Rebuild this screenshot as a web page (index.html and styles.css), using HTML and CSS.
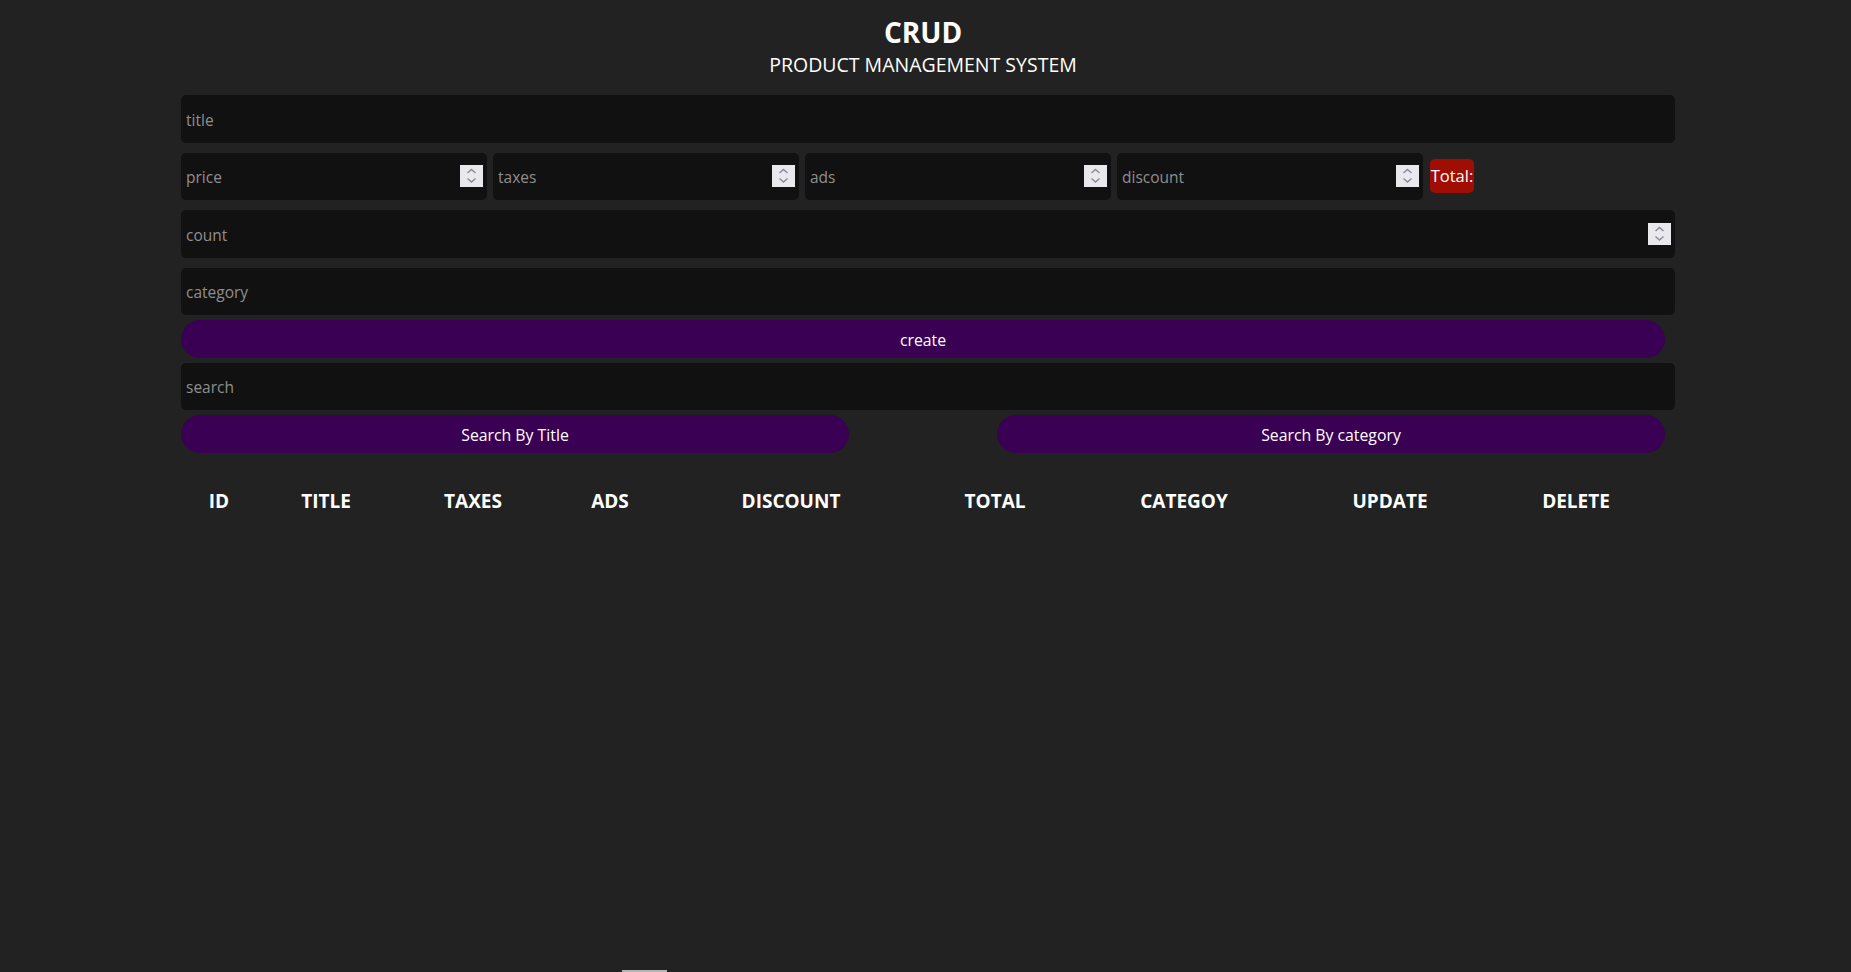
FILE: index.html
```html
<!DOCTYPE html>
<html lang="en">
<head>
<meta charset="utf-8">
<title>CRUD</title>
<link rel="stylesheet" href="styles.css">
</head>
<body>
<div class="crud">
  <div class="head">
    <h2 class="head-title">CRUD</h2>
    <p class="head-sub">PRODUCT MANAGEMENT SYSTEM</p>
  </div>
  <div class="inputs">
    <div class="field wide"><input class="field-input" type="text" placeholder="title"></div>
    <div class="price-row">
      <div class="field small"><input class="field-input" type="text" placeholder="price"><span class="spin"><svg width="23" height="22" viewBox="0 0 23 22"><path d="M7.5 8 L11.5 4.5 L15.5 8 M7.5 13.5 L11.5 17 L15.5 13.5" fill="none" stroke="#8a8a98" stroke-width="1.4"/></svg></span></div>
      <div class="field small"><input class="field-input" type="text" placeholder="taxes"><span class="spin"><svg width="23" height="22" viewBox="0 0 23 22"><path d="M7.5 8 L11.5 4.5 L15.5 8 M7.5 13.5 L11.5 17 L15.5 13.5" fill="none" stroke="#8a8a98" stroke-width="1.4"/></svg></span></div>
      <div class="field small"><input class="field-input" type="text" placeholder="ads"><span class="spin"><svg width="23" height="22" viewBox="0 0 23 22"><path d="M7.5 8 L11.5 4.5 L15.5 8 M7.5 13.5 L11.5 17 L15.5 13.5" fill="none" stroke="#8a8a98" stroke-width="1.4"/></svg></span></div>
      <div class="field small"><input class="field-input" type="text" placeholder="discount"><span class="spin"><svg width="23" height="22" viewBox="0 0 23 22"><path d="M7.5 8 L11.5 4.5 L15.5 8 M7.5 13.5 L11.5 17 L15.5 13.5" fill="none" stroke="#8a8a98" stroke-width="1.4"/></svg></span></div>
      <small class="total">Total:</small>
    </div>
    <div class="field wide"><input class="field-input" type="text" placeholder="count"><span class="spin"><svg width="23" height="22" viewBox="0 0 23 22"><path d="M7.5 8 L11.5 4.5 L15.5 8 M7.5 13.5 L11.5 17 L15.5 13.5" fill="none" stroke="#8a8a98" stroke-width="1.4"/></svg></span></div>
    <div class="field wide"><input class="field-input" type="text" placeholder="category"></div>
    <button class="btn btn-create">create</button>
    <div class="field wide"><input class="field-input" type="text" placeholder="search"></div>
    <div class="btn-search">
      <button class="btn btn-half">Search By Title</button>
      <button class="btn btn-half">Search By category</button>
    </div>
  </div>
  <table class="output">
    <colgroup>
      <col class="c-id"><col class="c-title"><col class="c-taxes"><col class="c-ads"><col class="c-discount"><col class="c-total"><col class="c-category"><col class="c-update"><col class="c-delete">
    </colgroup>
    <thead>
      <tr>
        <th>id</th><th>title</th><th>taxes</th><th>ads</th><th>discount</th><th>total</th><th>categoy</th><th>update</th><th>delete</th>
      </tr>
    </thead>
    <tbody></tbody>
  </table>
</div>
<div class="scroll-thumb"></div>
</body>
</html>
```
FILE: styles.css
```css
html, body {
  margin: 0;
  padding: 0;
  background: #222222;
  color: #ffffff;
  font-family: "Open Sans", "Noto Sans", sans-serif;
}

.crud {
  width: 1484px;
  margin-left: 181px;
}

.head {
  text-align: center;
  padding-top: 15px;
}

.head-title {
  margin: 0;
  font-size: 28px;
  font-weight: 700;
  line-height: 34px;
}

.head-sub {
  margin: 4px 0 0;
  font-size: 19.5px;
  font-weight: 400;
  line-height: 24px;
}

.inputs {
  display: flex;
  flex-direction: column;
  margin-top: 13px;
}

.field {
  box-sizing: border-box;
  height: 47.5px;
  margin: 5px 0;
  background: #111111;
  border-radius: 5px;
  display: flex;
  align-items: center;
  padding: 0 4px 0 5px;
}

.field.wide {
  width: 1494px;
}

.field.small {
  width: 306px;
  margin: 0;
}

.field-input {
  box-sizing: border-box;
  flex: 1;
  min-width: 0;
  border: none;
  outline: none;
  background: transparent;
  color: #ffffff;
  padding: 2px 0 0;
  font-family: "Open Sans", "Noto Sans", sans-serif;
  font-size: 15.5px;
  height: 26px;
}

.field-input::placeholder {
  color: #8f8f8f;
  opacity: 1;
}

.spin {
  display: block;
  width: 23px;
  height: 22px;
  background: #e9e9ed;
  flex: none;
}

.spin svg {
  display: block;
}

.price-row {
  display: flex;
  align-items: center;
  gap: 6px;
  height: 47.5px;
  margin: 5px 0;
}

.total {
  box-sizing: border-box;
  height: 34px;
  width: 44px;
  background: #a00d02;
  border-radius: 5px;
  font-size: 16.5px;
  line-height: 34px;
  text-align: center;
  color: #ffffff;
  margin-left: 1px;
}

.btn {
  box-sizing: border-box;
  height: 37.5px;
  border: none;
  background: #390053;
  color: #ffffff;
  border-radius: 25px;
  font-family: "Open Sans", "Noto Sans", sans-serif;
  font-size: 15.8px;
  padding: 2px 0 0;
  cursor: pointer;
}

.btn-create {
  width: 1484px;
}

.btn-search {
  display: flex;
  justify-content: space-between;
  width: 1484px;
}

.btn-half {
  width: 668px;
}

.output {
  width: 1482px;
  table-layout: fixed;
  border-collapse: collapse;
  margin-top: 35px;
  text-align: center;
}

.output th {
  padding: 0;
  font-size: 19px;
  font-weight: 700;
  line-height: 26px;
  text-transform: uppercase;
}

.c-id { width: 76px; }
.c-title { width: 138px; }
.c-taxes { width: 156px; }
.c-ads { width: 118px; }
.c-discount { width: 244px; }
.c-total { width: 164px; }
.c-category { width: 214px; }
.c-update { width: 198px; }
.c-delete { width: 174px; }

.scroll-thumb {
  position: fixed;
  left: 622px;
  bottom: 0;
  width: 45px;
  height: 2px;
  background: #b4b4b4;
}
```
